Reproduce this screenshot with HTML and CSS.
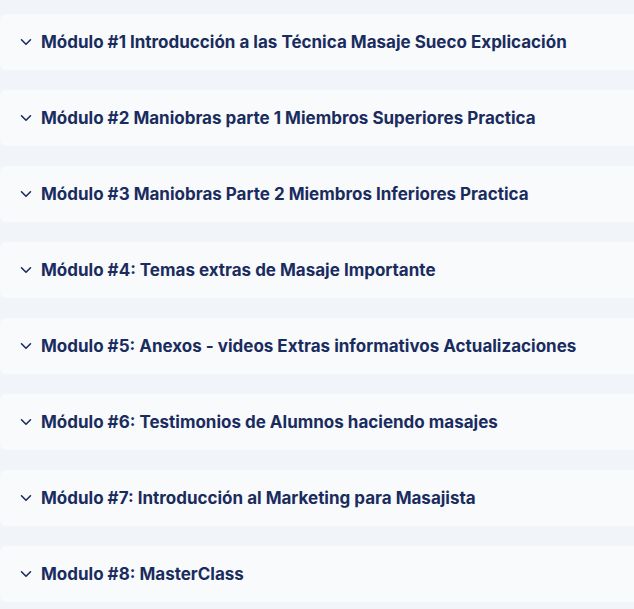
FILE: index.html
```html
<!DOCTYPE html>
<html lang="es">
<head>
  <meta charset="UTF-8" />
  <title>Módulos</title>
  <link rel="stylesheet" href="styles.css">
</head>
<body>
  <div class="modules">
    <div class="module"><svg class="chev" viewBox="0 0 12 8"><path d="M1.5 1.8 6 6.2 10.5 1.8" /></svg><span>Módulo #1 Introducción a las Técnica Masaje Sueco Explicación</span></div>
    <div class="module"><svg class="chev" viewBox="0 0 12 8"><path d="M1.5 1.8 6 6.2 10.5 1.8" /></svg><span>Módulo #2 Maniobras parte 1 Miembros Superiores Practica</span></div>
    <div class="module"><svg class="chev" viewBox="0 0 12 8"><path d="M1.5 1.8 6 6.2 10.5 1.8" /></svg><span>Módulo #3 Maniobras Parte 2 Miembros Inferiores Practica</span></div>
    <div class="module"><svg class="chev" viewBox="0 0 12 8"><path d="M1.5 1.8 6 6.2 10.5 1.8" /></svg><span>Módulo #4: Temas extras de Masaje Importante</span></div>
    <div class="module"><svg class="chev" viewBox="0 0 12 8"><path d="M1.5 1.8 6 6.2 10.5 1.8" /></svg><span>Modulo #5: Anexos - videos Extras informativos Actualizaciones</span></div>
    <div class="module"><svg class="chev" viewBox="0 0 12 8"><path d="M1.5 1.8 6 6.2 10.5 1.8" /></svg><span>Módulo #6: Testimonios de Alumnos haciendo masajes</span></div>
    <div class="module"><svg class="chev" viewBox="0 0 12 8"><path d="M1.5 1.8 6 6.2 10.5 1.8" /></svg><span>Módulo #7: Introducción al Marketing para Masajista</span></div>
    <div class="module"><svg class="chev" viewBox="0 0 12 8"><path d="M1.5 1.8 6 6.2 10.5 1.8" /></svg><span>Modulo #8: MasterClass</span></div>
  </div>
</body>
</html>
```

FILE: styles.css
```css
body {
  margin: 0;
  background: #f1f4f8;
  font-family: 'Inter', sans-serif;
}
.modules {
  display: flex;
  flex-direction: column;
  gap: 20px;
  padding-top: 14px;
}
.module {
  display: flex;
  align-items: center;
  height: 56px;
  margin-right: -6px;
  padding-left: 20px;
  background: #f8fafc;
  border-radius: 6px;
  color: #1a2c5e;
  font-size: 17px;
  font-weight: 700;
}
.chev {
  width: 12px;
  height: 8px;
  margin-right: 9px;
  fill: none;
  stroke: #1a2c5e;
  stroke-width: 1.6;
  stroke-linecap: round;
  stroke-linejoin: round;
}
```
